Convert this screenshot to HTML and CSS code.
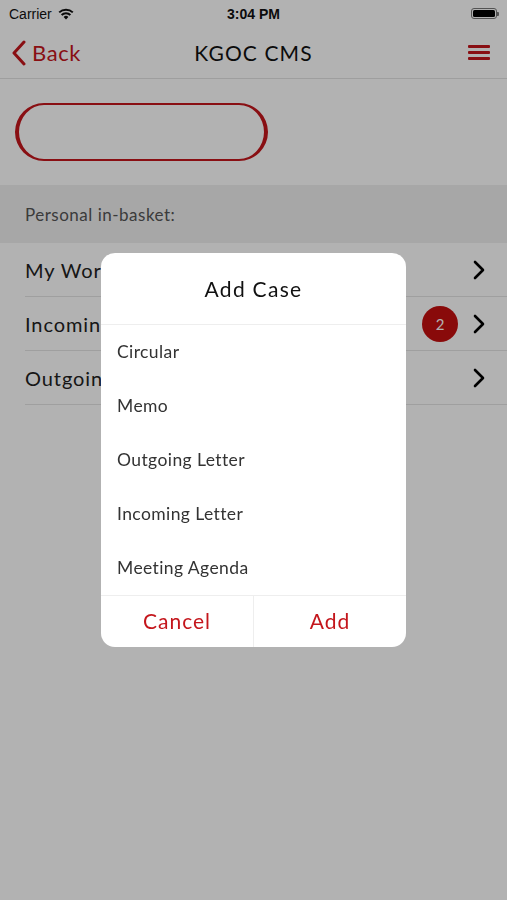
FILE: index.html
```html
<!DOCTYPE html>
<html>
<head>
<meta charset="utf-8">
<link rel="stylesheet" href="styles.css">
</head>
<body>
<div class="page">
  <div class="status">
    <div class="carrier">Carrier
      <svg class="wifi" width="16" height="12" viewBox="0 0 16 12"><path d="M8 11.5 L5.6 9 A3.4 3.4 0 0 1 10.4 9 Z" fill="#111"/><path d="M3.6 7 A6.3 6.3 0 0 1 12.4 7" stroke="#111" stroke-width="2" fill="none"/><path d="M1.2 4.4 A9.8 9.8 0 0 1 14.8 4.4" stroke="#111" stroke-width="2" fill="none"/></svg>
    </div>
    <div class="time">3:04 PM</div>
    <div class="battery"><span class="batt-body"><span class="batt-fill"></span></span><span class="batt-tip"></span></div>
  </div>
  <div class="nav">
    <div class="back">
      <svg width="16" height="26" viewBox="0 0 16 26"><path d="M13 2 L3 13 L13 24" stroke="#c4161c" stroke-width="3" fill="none" stroke-linecap="round" stroke-linejoin="round"/></svg>
      <span>Back</span>
    </div>
    <div class="title">KGOC CMS</div>
    <div class="menu"><span></span><span></span><span></span></div>
  </div>
  <div class="search-wrap"><div class="search"></div></div>
  <div class="section">Personal in-basket:</div>
  <div class="list">
    <div class="row"><span class="label">My Worklist</span><svg class="chev" width="14" height="20" viewBox="0 0 14 20"><path d="M3 2 L11 10 L3 18" stroke="#000" stroke-width="2.6" fill="none" stroke-linecap="round" stroke-linejoin="round"/></svg></div>
    <div class="row"><span class="label">Incoming</span><span class="badge">2</span><svg class="chev" width="14" height="20" viewBox="0 0 14 20"><path d="M3 2 L11 10 L3 18" stroke="#000" stroke-width="2.6" fill="none" stroke-linecap="round" stroke-linejoin="round"/></svg></div>
    <div class="row"><span class="label">Outgoing</span><svg class="chev" width="14" height="20" viewBox="0 0 14 20"><path d="M3 2 L11 10 L3 18" stroke="#000" stroke-width="2.6" fill="none" stroke-linecap="round" stroke-linejoin="round"/></svg></div>
  </div>
</div>
<div class="overlay">
  <div class="dialog">
    <div class="d-title">Add Case</div>
    <div class="d-items">
      <div class="d-item">Circular</div>
      <div class="d-item">Memo</div>
      <div class="d-item">Outgoing Letter</div>
      <div class="d-item">Incoming Letter</div>
      <div class="d-item">Meeting Agenda</div>
    </div>
    <div class="d-buttons">
      <div class="d-btn">Cancel</div>
      <div class="d-btn">Add</div>
    </div>
  </div>
</div>
</body>
</html>
```
FILE: styles.css
```css
html, body {
  margin: 0;
  padding: 0;
}
body {
  width: 507px;
  height: 900px;
  background: #fff;
  font-family: Lato, "Open Sans", sans-serif;
  color: #333;
  overflow: hidden;
}
.page {
  height: 900px;
}
.status {
  height: 27px;
  display: flex;
  align-items: center;
  justify-content: space-between;
  padding: 0 8px 0 9px;
  font-family: "Liberation Sans", Arial, sans-serif;
  font-size: 14px;
  color: #111;
  position: relative;
}
.carrier {
  display: flex;
  align-items: center;
  gap: 6px;
}
.time {
  position: absolute;
  left: 0;
  right: 0;
  text-align: center;
  font-weight: bold;
  pointer-events: none;
}
.battery {
  display: flex;
  align-items: center;
}
.batt-body {
  width: 26px;
  height: 11px;
  border: 1px solid #777;
  border-radius: 3px;
  padding: 1px;
  box-sizing: border-box;
  display: flex;
}
.batt-fill {
  flex: 1;
  background: #000;
  border-radius: 1.5px;
}
.batt-tip {
  width: 2px;
  height: 4px;
  background: #777;
  border-radius: 0 1px 1px 0;
}
.nav {
  height: 51px;
  border-bottom: 1px solid #e2e2e2;
  display: flex;
  align-items: center;
  justify-content: space-between;
  padding: 0 17px 0 11px;
  position: relative;
}
.back {
  display: flex;
  align-items: center;
  gap: 5px;
  color: #c4161c;
  font-size: 22px;
  letter-spacing: 0.6px;
}
.title {
  position: absolute;
  left: 0;
  right: 0;
  text-align: center;
  font-size: 21px;
  letter-spacing: 1.1px;
  color: #111;
  pointer-events: none;
}
.menu {
  display: flex;
  flex-direction: column;
  gap: 3px;
  width: 22px;
}
.menu span {
  display: block;
  height: 3px;
  background: #c4161c;
  border-radius: 1px;
}
.search-wrap {
  padding: 24px 0 24px 15px;
}
.search {
  width: 253px;
  height: 58px;
  box-sizing: border-box;
  border: 2px solid #c4161c;
  border-left-width: 4px;
  border-right-width: 4px;
  border-radius: 29px;
}
.section {
  height: 58px;
  background: #f0f0f0;
  display: flex;
  align-items: center;
  padding-left: 25px;
  font-size: 17px;
  letter-spacing: 0.5px;
  color: #555;
}
.list {
  padding-left: 25px;
}
.row {
  height: 53px;
  border-bottom: 1px solid #e4e4e4;
  display: flex;
  align-items: center;
  padding-right: 21px;
}
.label {
  flex: 1;
  font-size: 20px;
  letter-spacing: 0.9px;
  color: #222;
}
.badge {
  width: 36px;
  height: 36px;
  border-radius: 50%;
  background: #c40f0f;
  color: #fff;
  font-size: 15px;
  display: flex;
  align-items: center;
  justify-content: center;
  margin-right: 14px;
}
.overlay {
  position: fixed;
  inset: 0;
  background: rgba(0, 0, 0, 0.3);
  display: flex;
  align-items: center;
  justify-content: center;
}
.dialog {
  width: 305px;
  height: 394px;
  background: #fff;
  border-radius: 14px;
  display: flex;
  flex-direction: column;
  overflow: hidden;
}
.d-title {
  height: 71px;
  border-bottom: 1px solid #eee;
  display: flex;
  align-items: center;
  justify-content: center;
  font-size: 21px;
  letter-spacing: 1.3px;
  color: #111;
}
.d-items {
  display: flex;
  flex-direction: column;
}
.d-item {
  height: 54px;
  display: flex;
  align-items: center;
  padding-left: 16px;
  padding-bottom: 1px;
  box-sizing: border-box;
  font-size: 17.5px;
  letter-spacing: 0.4px;
  color: #333;
}
.d-buttons {
  flex: 1;
  border-top: 1px solid #eee;
  display: flex;
}
.d-btn {
  flex: 1;
  display: flex;
  align-items: center;
  justify-content: center;
  font-size: 21px;
  letter-spacing: 1px;
  color: #c4161c;
  padding-bottom: 2px;
}
.d-btn + .d-btn {
  border-left: 1px solid #eee;
}
```
